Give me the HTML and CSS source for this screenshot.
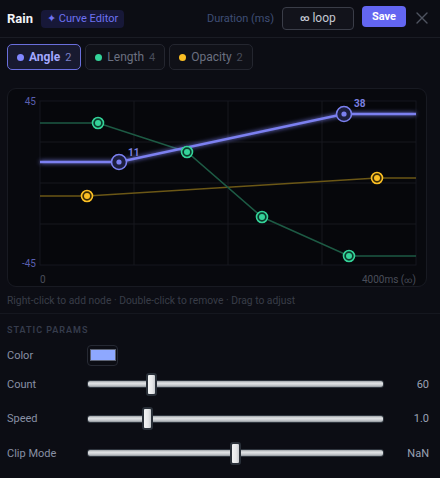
FILE: index.html
```html
<!DOCTYPE html>
<html>
<head>
<meta charset="utf-8">
<link rel="stylesheet" href="styles.css">
</head>
<body>
<div class="app">
  <header class="header">
    <span class="title">Rain</span>
    <span class="badge">✦ Curve Editor</span>
    <span class="spacer"></span>
    <span class="dur-label">Duration (ms)</span>
    <div class="dur-input"><span class="inf">∞</span>&nbsp;loop</div>
    <button class="save">Save</button>
    <span class="close">
      <svg width="12" height="12" viewBox="0 0 12 12"><path d="M1 1 L11 11 M11 1 L1 11" stroke="#4f5461" stroke-width="1.4" stroke-linecap="round"/></svg>
    </span>
  </header>

  <div class="tabs">
    <div class="tab active"><span class="dot dot-angle"></span><span class="tab-name">Angle</span><span class="tab-count">2</span></div>
    <div class="tab"><span class="dot dot-length"></span><span class="tab-name">Length</span><span class="tab-count">4</span></div>
    <div class="tab"><span class="dot dot-opacity"></span><span class="tab-name">Opacity</span><span class="tab-count">2</span></div>
  </div>

  <div class="chart">
    <svg class="chart-svg" viewBox="0 0 418 197" width="418" height="197">
      <defs>
        <filter id="glow" x="-20%" y="-50%" width="140%" height="200%">
          <feGaussianBlur stdDeviation="2" result="b"/>
          <feMerge><feMergeNode in="b"/><feMergeNode in="SourceGraphic"/></feMerge>
        </filter>
      </defs>
      <rect x="32" y="12" width="376" height="164" fill="#06070b" stroke="#15171f" stroke-width="1"/>
      <g stroke="#16181f" stroke-width="1">
        <line x1="126" y1="12" x2="126" y2="176"/>
        <line x1="220" y1="12" x2="220" y2="176"/>
        <line x1="314" y1="12" x2="314" y2="176"/>
        <line x1="32" y1="53" x2="408" y2="53"/>
        <line x1="32" y1="94" x2="408" y2="94"/>
        <line x1="32" y1="135" x2="408" y2="135"/>
      </g>
      <text class="ylab" x="28" y="16" text-anchor="end">45</text>
      <text class="ylab" x="28" y="178" text-anchor="end">-45</text>
      <text class="xlab" x="32" y="194">0</text>
      <text class="xlab" x="408" y="194" text-anchor="end">4000ms (<tspan class="inf-s">∞</tspan>)</text>

      <polyline points="32,107 79,107 369,89 408,89" fill="none" stroke="#6b5716" stroke-width="1.5"/>
      <polyline points="32,34 90,34 179,63 254,128 341,167 408,167" fill="none" stroke="#1d5a44" stroke-width="1.5"/>
      <polyline points="32,73 111,73 336,25 408,25" fill="none" stroke="#7b80f0" stroke-width="2.5" filter="url(#glow)"/>

      <g>
        <circle cx="79" cy="107" r="5.5" fill="#3a2c05" stroke="#fbbf24" stroke-width="1.6"/>
        <circle cx="79" cy="107" r="3" fill="#fbbf24"/>
        <circle cx="369" cy="89" r="5.5" fill="#3a2c05" stroke="#fbbf24" stroke-width="1.6"/>
        <circle cx="369" cy="89" r="3" fill="#fbbf24"/>
      </g>
      <g>
        <circle cx="90" cy="34" r="5.5" fill="#0b3a2b" stroke="#34d399" stroke-width="1.6"/>
        <circle cx="90" cy="34" r="3" fill="#34d399"/>
        <circle cx="179" cy="63" r="5.5" fill="#0b3a2b" stroke="#34d399" stroke-width="1.6"/>
        <circle cx="179" cy="63" r="3" fill="#34d399"/>
        <circle cx="254" cy="128" r="5.5" fill="#0b3a2b" stroke="#34d399" stroke-width="1.6"/>
        <circle cx="254" cy="128" r="3" fill="#34d399"/>
        <circle cx="341" cy="167" r="5.5" fill="#0b3a2b" stroke="#34d399" stroke-width="1.6"/>
        <circle cx="341" cy="167" r="3" fill="#34d399"/>
      </g>
      <g>
        <circle cx="111" cy="73" r="7.5" fill="#1c1e3e" stroke="#7b80f0" stroke-width="1.6"/>
        <circle cx="111" cy="73" r="2.6" fill="#7b80f0"/>
        <circle cx="336" cy="25" r="7.5" fill="#1c1e3e" stroke="#7b80f0" stroke-width="1.6"/>
        <circle cx="336" cy="25" r="2.6" fill="#7b80f0"/>
      </g>
      <text class="nlab" x="120" y="67">11</text>
      <text class="nlab" x="346" y="18">38</text>
    </svg>
  </div>

  <div class="hint">Right-click to add node · Double-click to remove · Drag to adjust</div>

  <section class="params">
    <div class="section-title">STATIC PARAMS</div>
    <div class="row row-color">
      <span class="label">Color</span>
      <span class="swatch"><span class="swatch-inner"></span></span>
    </div>
    <div class="row">
      <span class="label">Count</span>
      <input class="slider" type="range" min="0" max="100" step="0.1" value="20.4">
      <span class="value">60</span>
    </div>
    <div class="row">
      <span class="label">Speed</span>
      <input class="slider" type="range" min="0" max="100" step="0.1" value="19">
      <span class="value">1.0</span>
    </div>
    <div class="row">
      <span class="label">Clip Mode</span>
      <input class="slider" type="range" min="0" max="100" step="0.1" value="50">
      <span class="value">NaN</span>
    </div>
  </section>
</div>
</body>
</html>
```

FILE: styles.css
```css
* { box-sizing: border-box; }
html, body {
  margin: 0;
  padding: 0;
  background: #0c0d14;
  font-family: Roboto, "Liberation Sans", sans-serif;
  color: #c8ccd6;
}
.app {
  width: 440px;
  height: 478px;
  overflow: hidden;
}
.header {
  height: 38px;
  display: flex;
  align-items: center;
  padding: 0 12px 0 7px;
  border-bottom: 1px solid #1a1c24;
}
.title {
  font-weight: 700;
  font-size: 13px;
  color: #f2f3f7;
}
.badge {
  margin-left: 8px;
  height: 18px;
  display: inline-flex;
  align-items: center;
  padding: 0 6px;
  border-radius: 4px;
  background: #171838;
  color: #6e72f2;
  font-size: 11px;
}
.spacer { flex: 1; }
.dur-label {
  font-size: 11px;
  color: #3f4e74;
  margin-right: 8px;
}
.dur-input {
  width: 72px;
  height: 23px;
  border: 1px solid #3a3d48;
  border-radius: 4px;
  background: #12131b;
  color: #c4c8d2;
  font-size: 12px;
  display: flex;
  align-items: center;
  padding-left: 17px;
  margin-top: -1px;
}
.inf { font-size: 9px; font-weight: 700; }
.inf-s { font-size: 8px; }
.save {
  margin-left: 8px;
  height: 21px;
  width: 44px;
  border: none;
  border-radius: 4px;
  background: #6366f1;
  color: #fff;
  font-family: inherit;
  font-weight: 700;
  font-size: 11px;
  padding: 0;
  margin-top: -4px;
}
.close {
  margin-left: 10px;
  display: flex;
  align-items: center;
  margin-top: -2px;
}
.tabs {
  display: flex;
  gap: 4px;
  padding: 6px 7px 0;
}
.tab {
  height: 26px;
  display: flex;
  align-items: center;
  padding: 0 9px;
  border: 1px solid #24262f;
  border-radius: 5px;
  background: #101118;
  font-size: 12px;
  color: #6b7080;
}
.tab.active {
  border-color: #6a6fdc;
  background: #181a30;
}
.dot {
  width: 7px;
  height: 7px;
  border-radius: 50%;
  margin-right: 5px;
}
.dot-angle { background: #8187ff; }
.dot-length { background: #34d399; }
.dot-opacity { background: #fbbf24; }
.tab-name { font-weight: 400; }
.tab.active .tab-name { color: #a3a8ff; font-weight: 700; }
.tab-count {
  margin-left: 5px;
  font-size: 11px;
  color: #474c58;
}
.tab.active .tab-count { color: #7b80c8; }
.chart {
  margin: 18px 13px 0 7px;
  height: 199px;
  border: 1px solid #181a22;
  border-radius: 9px;
  background: #08090e;
  overflow: hidden;
}
.chart-svg { display: block; }
.ylab {
  font-size: 10px;
  fill: #5a5fae;
  font-family: Roboto, sans-serif;
}
.xlab {
  font-size: 10px;
  fill: #4a4e5a;
  font-family: Roboto, sans-serif;
}
.nlab {
  font-size: 10px;
  font-weight: 700;
  fill: #7b80e0;
  font-family: Roboto, sans-serif;
}
.hint {
  padding: 7px 7px 0;
  font-size: 10.3px;
  color: #393d48;
  height: 27px;
  border-bottom: 1px solid #15171f;
}
.params {
  padding: 10px 11px 0 7px;
}
.section-title {
  font-size: 9px;
  font-weight: 600;
  letter-spacing: 1px;
  color: #363c4c;
  height: 19px;
  line-height: 12px;
}
.row {
  display: flex;
  align-items: center;
  height: 34.5px;
}
.row-color { height: 24px; }
.label {
  width: 80px;
  font-size: 11px;
  color: #8890a4;
}
.value {
  flex: 1;
  text-align: right;
  font-size: 11px;
  color: #9aa2b4;
}
.swatch {
  width: 31px;
  height: 21px;
  border: 1px solid #262933;
  border-radius: 4px;
  background: #0c0d14;
  display: flex;
  align-items: center;
  justify-content: center;
}
.swatch-inner {
  width: 26px;
  height: 12px;
  background: #8ea8ff;
  border: 1px solid #5d6374;
}
.slider {
  -webkit-appearance: none;
  appearance: none;
  width: 297px;
  height: 23px;
  margin: 0;
  background: transparent;
}
.slider::-webkit-slider-runnable-track {
  height: 8px;
  border-radius: 3px;
  border: 1px solid #2e343d;
  background: linear-gradient(#9ea3a8 0%, #e2e4e6 35%, #c8cbcf 70%, #8f959b 100%);
}
.slider::-webkit-slider-thumb {
  -webkit-appearance: none;
  width: 11px;
  height: 23px;
  margin-top: -8.5px;
  border: 2px solid #2a3039;
  border-radius: 3px;
  background: linear-gradient(90deg, #f2f3f4 0%, #e6e7e9 60%, #c9ccd0 100%);
}
```
